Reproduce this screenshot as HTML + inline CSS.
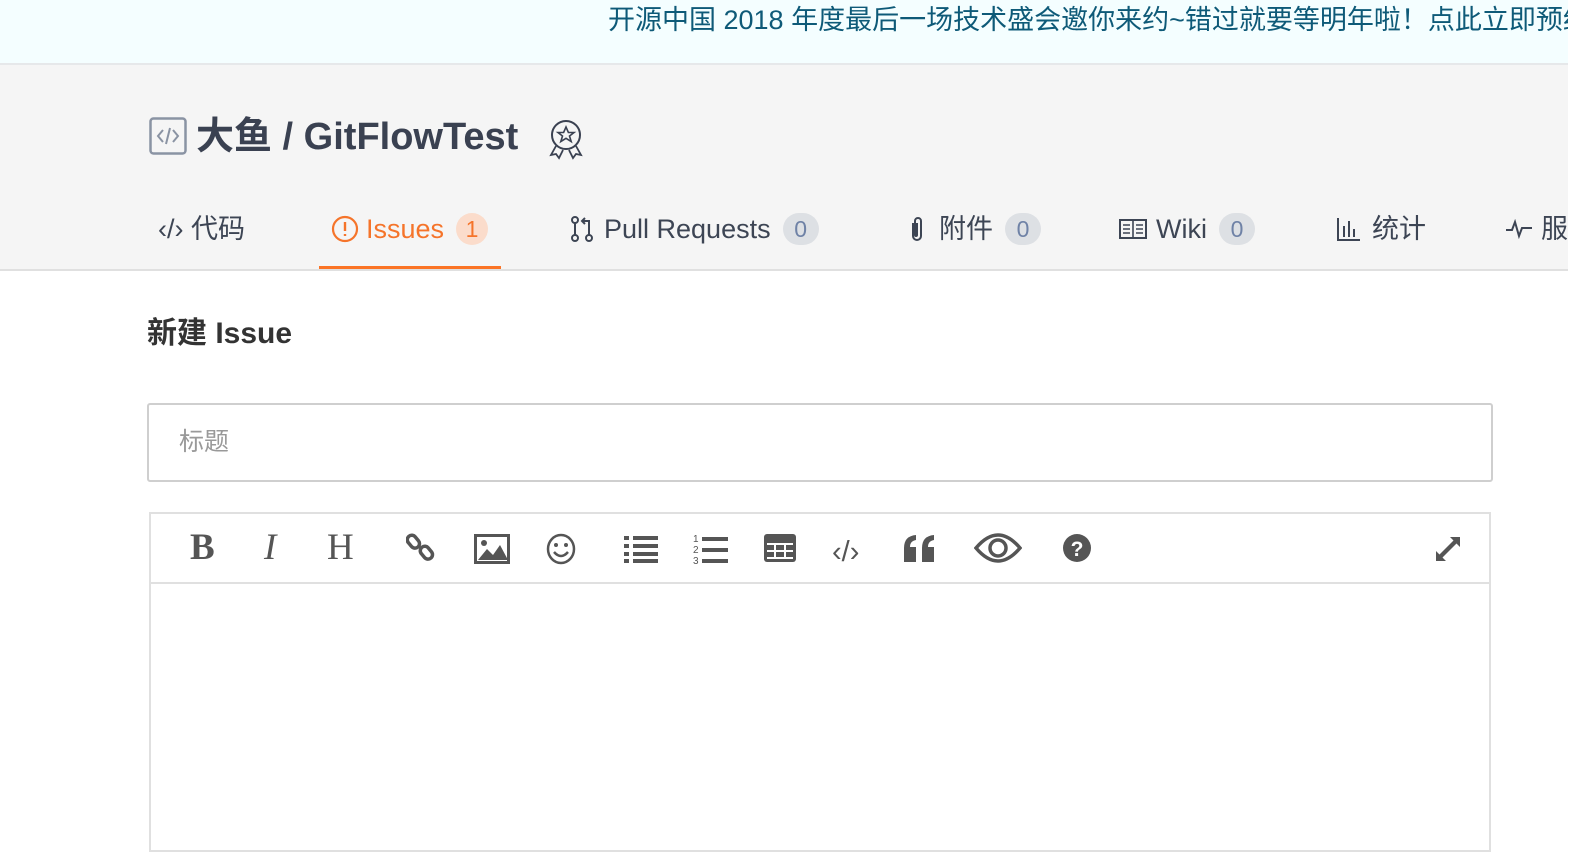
<!DOCTYPE html>
<html><head><meta charset="utf-8"><style>
*{margin:0;padding:0;box-sizing:border-box}
body{width:1582px;height:844px;overflow:hidden;background:#fff;font-family:"Liberation Sans","Noto Sans CJK SC",sans-serif;position:relative}
.banner{position:absolute;left:0;top:0;width:1568px;height:65px;background:#f4feff;border-bottom:2px solid #e6e8ea;overflow:hidden}
.banner span{position:absolute;left:608px;top:2px;font-size:27px;color:#0e5a78;white-space:nowrap;line-height:36px}
.head{position:absolute;left:0;top:65px;width:1568px;height:206px;background:#f5f5f5;border-bottom:2px solid #e0e0e0;overflow:hidden}
.title{position:absolute;left:196px;top:48px;font-size:38px;font-weight:bold;color:#3a4151;line-height:48px;white-space:nowrap}
.tab{position:absolute;top:144px;font-size:27px;color:#3d4554;line-height:40px;white-space:nowrap;display:flex;align-items:center}
.badge{display:inline-block;width:36px;height:32px;border-radius:16px;background:#dde0e4;color:#6f82a6;font-size:23px;text-align:center;line-height:32px;margin-left:12px}
.ul{position:absolute;left:319px;top:201px;width:182px;height:5px;background:#fb7426}
.h2{position:absolute;left:147px;top:314px;font-size:30px;font-weight:bold;color:#333;line-height:40px}
.inp{position:absolute;left:147px;top:403px;width:1346px;height:79px;border:2px solid #cfcfcf;border-radius:3px;font-size:25px;color:#999;padding-left:30px;line-height:75px}
.ed{position:absolute;left:149px;top:512px;width:1342px;height:340px;border:2px solid #e0e0e0}
.tb{height:70px;border-bottom:2px solid #e0e0e0;position:relative}
.ic{position:absolute;top:16px;color:#555;font-family:"Liberation Serif",serif;font-size:37px;line-height:36px}
</style></head><body>
<div class="banner"><span>开源中国 2018 年度最后一场技术盛会邀你来约~错过就要等明年啦！点此立即预约</span></div>
<div class="head">
<svg style="position:absolute;left:149px;top:52px" width="38" height="38" viewBox="0 0 38 38"><rect x="1.5" y="1.5" width="35" height="35" rx="3" fill="none" stroke="#8a93a3" stroke-width="2.5"/><path d="M14 13l-5 6 5 6M24 13l5 6-5 6M21 11l-4 16" fill="none" stroke="#8a93a3" stroke-width="2"/></svg>
<div class="title">大鱼 / GitFlowTest</div>
<svg style="position:absolute;left:546px;top:54px" width="40" height="42" viewBox="0 0 40 42"><circle cx="20" cy="16" r="14" fill="none" stroke="#3a4151" stroke-width="2"/><path d="M20 8l2.4 5.5h5.6l-4.5 3.5 1.7 5.6-5.2-3.3-5.2 3.3 1.7-5.6-4.5-3.5h5.6z" fill="none" stroke="#3a4151" stroke-width="1.6"/><path d="M10 27l-5 9 5-1 3 4 4-8M30 27l5 9-5-1-3 4-4-8" fill="none" stroke="#3a4151" stroke-width="1.8"/></svg>
<div class="tab" style="left:158px">‹/› 代码</div>
<div class="tab" style="left:331px;color:#f5742a"><svg width="28" height="28" viewBox="0 0 28 28" style="margin-right:7px"><circle cx="14" cy="14" r="12" fill="none" stroke="#f5742a" stroke-width="2.2"/><path d="M14 7v9M14 19v2" stroke="#f5742a" stroke-width="2.4"/></svg>Issues<span class="badge" style="background:#fbdccb;color:#f5742a;width:32px">1</span></div>
<div class="tab" style="left:570px"><svg width="24" height="28" viewBox="0 0 24 28" style="margin-right:10px"><circle cx="5" cy="5" r="3" fill="none" stroke="#3d4554" stroke-width="2"/><circle cx="5" cy="23" r="3" fill="none" stroke="#3d4554" stroke-width="2"/><circle cx="19" cy="23" r="3" fill="none" stroke="#3d4554" stroke-width="2"/><path d="M5 8v12M19 20V6h-6M15 3l-3 3 3 3" fill="none" stroke="#3d4554" stroke-width="2"/></svg>Pull Requests<span class="badge">0</span></div>
<div class="tab" style="left:907px"><svg width="20" height="28" viewBox="0 0 20 28" style="margin-right:12px"><path d="M6 8v13a4 4 0 0 0 8 0V6a3 3 0 0 0-6 0v14a1 1 0 0 0 2 0V8" fill="none" stroke="#3d4554" stroke-width="2"/></svg>附件<span class="badge">0</span></div>
<div class="tab" style="left:1119px"><svg width="28" height="22" viewBox="0 0 28 22" style="margin-right:9px"><rect x="1" y="2" width="26" height="18" fill="none" stroke="#3d4554" stroke-width="2"/><path d="M14 2v18M4 7h7M4 11h7M4 15h7M17 7h7M17 11h7M17 15h7" stroke="#3d4554" stroke-width="1.6"/></svg>Wiki<span class="badge">0</span></div>
<div class="tab" style="left:1336px"><svg width="26" height="26" viewBox="0 0 26 26" style="margin-right:10px"><path d="M2 2v22h22M8 10v11M13 5v16M18 13v8" stroke="#3d4554" stroke-width="2" fill="none"/></svg>统计</div>
<div class="tab" style="left:1505px"><svg width="28" height="20" viewBox="0 0 28 20" style="margin-right:8px"><path d="M1 11h6l3-8 4 14 3-8h10" fill="none" stroke="#3d4554" stroke-width="2"/></svg>服务</div>
<div class="ul"></div>
</div>
<div class="h2">新建 Issue</div>
<div class="inp">标题</div>
<div class="ed"><div class="tb">
<span class="ic" style="left:39px;font-weight:bold">B</span>
<span class="ic" style="left:113px;font-style:italic">I</span>
<span class="ic" style="left:176px">H</span>
<svg style="position:absolute;left:255px;top:18px" width="30" height="32" viewBox="0 0 30 32"><rect x="3" y="3" width="9" height="14" rx="4.5" transform="rotate(-40 7 10)" fill="none" stroke="#555" stroke-width="3.5"/><rect x="16" y="14" width="9" height="14" rx="4.5" transform="rotate(-40 20 21)" fill="none" stroke="#555" stroke-width="3.5"/></svg>
<svg style="position:absolute;left:323px;top:20px" width="36" height="30" viewBox="0 0 36 30"><rect x="1.5" y="1.5" width="33" height="27" fill="none" stroke="#555" stroke-width="3"/><path d="M4 26l9-11 6 6 7-10 8 15z" fill="#555"/><circle cx="10" cy="9" r="3" fill="#555"/></svg>
<svg style="position:absolute;left:395px;top:19px" width="30" height="32" viewBox="0 0 30 32"><ellipse cx="15" cy="16" rx="13" ry="14" fill="none" stroke="#555" stroke-width="2.5"/><circle cx="10" cy="12" r="2" fill="#555"/><circle cx="20" cy="12" r="2" fill="#555"/><path d="M8 19q7 8 14 0" fill="none" stroke="#555" stroke-width="2.5"/></svg>
<svg style="position:absolute;left:473px;top:21px" width="34" height="28" viewBox="0 0 34 28"><path d="M0 3h5M9 3h25M0 11h5M9 11h25M0 19h5M9 19h25M0 26h5M9 26h25" stroke="#555" stroke-width="4"/></svg>
<svg style="position:absolute;left:542px;top:18px" width="36" height="34" viewBox="0 0 36 34"><text x="0" y="10" font-size="10" fill="#555" font-family="Liberation Sans">1</text><text x="0" y="21" font-size="10" fill="#555" font-family="Liberation Sans">2</text><text x="0" y="32" font-size="10" fill="#555" font-family="Liberation Sans">3</text><path d="M9 7h26M9 18h26M9 29h26" stroke="#555" stroke-width="4"/></svg>
<svg style="position:absolute;left:613px;top:20px" width="32" height="28" viewBox="0 0 32 28"><rect x="0" y="0" width="32" height="28" rx="3" fill="#555"/><path d="M3 10h26M3 17h26M3 24h26M11 10v15M21 10v15" stroke="#fff" stroke-width="2"/></svg>
<span class="ic" style="left:681px;font-family:'Liberation Sans';font-size:29px;top:20px">‹/›</span>
<svg style="position:absolute;left:751px;top:20px" width="34" height="28" viewBox="0 0 34 28"><path d="M2 28V14Q2 2 14 1v5q-6 1-6 7h6v15zM20 28V14Q20 2 32 1v5q-6 1-6 7h6v15z" fill="#555"/></svg>
<svg style="position:absolute;left:823px;top:16px" width="48" height="36" viewBox="0 0 48 36"><path d="M2 18Q24-8 46 18Q24 44 2 18z" fill="none" stroke="#555" stroke-width="3.5"/><circle cx="24" cy="18" r="8" fill="none" stroke="#555" stroke-width="3.5"/></svg>
<svg style="position:absolute;left:911px;top:19px" width="30" height="30" viewBox="0 0 30 30"><circle cx="15" cy="15" r="14" fill="#555"/><text x="15" y="23" font-size="21" font-weight="bold" fill="#fff" text-anchor="middle" font-family="Liberation Sans">?</text></svg>
<svg style="position:absolute;left:1284px;top:22px" width="26" height="26" viewBox="0 0 26 26"><path d="M15 1h10v10l-3.5-3.5L7.5 21.5 11 25H1V15l3.5 3.5L18.5 4.5z" fill="#555"/></svg>
</div></div>
</body></html>
